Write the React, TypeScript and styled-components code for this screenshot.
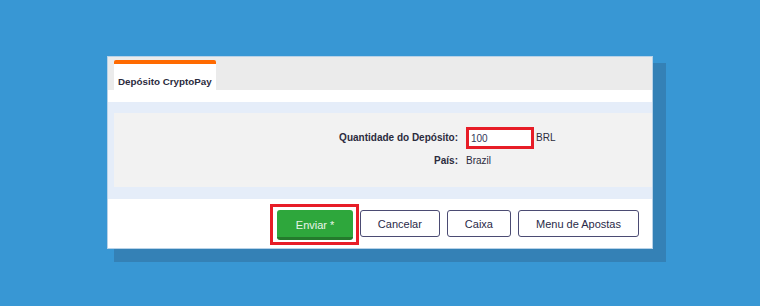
import React from "react";
import styled, { createGlobalStyle } from "styled-components";

const GlobalStyle = createGlobalStyle`
  html, body {
    margin: 0;
    padding: 0;
    background: #3897d4;
  }
  * {
    box-sizing: border-box;
  }
`;

const Page = styled.div`
  width: 760px;
  height: 306px;
  padding: 56px 0 0 107px;
  background: #3897d4;
  font-family: "Liberation Sans", Arial, sans-serif;
  overflow: hidden;
`;

const Panel = styled.div`
  width: 546px;
  height: 193px;
  display: flex;
  flex-direction: column;
  background: #ffffff;
  border: 1px solid #b7d2e8;
  box-shadow: 10px 10px 0 3px #3481b6;
`;

const TabBar = styled.div`
  height: 33px;
  display: flex;
  align-items: flex-end;
  padding-left: 6px;
  background: #ebebeb;
`;

const Tab = styled.div`
  height: 30px;
  padding: 12px 4px 0;
  background: #ffffff;
  border-top: 4px solid #ff6a00;
  border-radius: 2px 2px 0 0;
  font-size: 9.8px;
  font-weight: bold;
  line-height: 12px;
  color: #2b2b3d;
  white-space: nowrap;
`;

const Spacer = styled.div`
  height: 12px;
`;

const Body = styled.div`
  height: 97px;
  padding: 11px 0 12px 6px;
  background: #e5edf9;
`;

const FormBox = styled.div`
  height: 74px;
  display: grid;
  grid-template-columns: 344px auto;
  column-gap: 8px;
  row-gap: 6px;
  align-content: start;
  align-items: center;
  padding-top: 14px;
  background: #f2f2f2;
`;

const Label = styled.div`
  text-align: right;
  font-size: 10px;
  font-weight: bold;
  line-height: 12px;
  color: #2b2b3d;
`;

const Value = styled.div`
  display: flex;
  align-items: center;
  gap: 2px;
  font-size: 10px;
  line-height: 12px;
  color: #2b2b3d;
`;

const AmountInput = styled.input`
  width: 68px;
  height: 22px;
  padding: 0 0 0 2px;
  border: 3px solid #e71d27;
  background: #ffffff;
  font-family: "Liberation Sans", Arial, sans-serif;
  font-size: 10px;
  color: #33385a;
  outline: none;
`;

const Footer = styled.div`
  flex: 1;
  display: flex;
  justify-content: flex-end;
  align-items: flex-start;
  gap: 7px;
  padding: 11px 13px 0 0;
`;

const Highlight = styled.div`
  display: flex;
  flex-shrink: 0;
  padding: 3px 3px 2px 4px;
  margin: -6px -6px -5px -7px;
  border: 3px solid #e71d27;
`;

const Button = styled.button<{ $primary?: boolean }>`
  flex-shrink: 0;
  height: ${(p) => (p.$primary ? "30px" : "27px")};
  padding: 0 ${(p) => (p.$primary ? "18.5px" : "17px")};
  font-family: "Liberation Sans", Arial, sans-serif;
  font-size: 11px;
  border-radius: 3px;
  cursor: pointer;
  white-space: nowrap;
  background: ${(p) => (p.$primary ? "#2ea73c" : "#ffffff")};
  color: ${(p) => (p.$primary ? "#e9f5ea" : "#2a2a48")};
  border: ${(p) => (p.$primary ? "none" : "1px solid #4b4b73")};
  border-bottom: ${(p) => (p.$primary ? "3px solid #247a2c" : "1px solid #4b4b73")};
  padding-top: ${(p) => (p.$primary ? "2px" : "0")};
  outline: none;
`;

export default function App() {
  return (
    <>
      <GlobalStyle />
      <Page>
        <Panel>
          <TabBar>
            <Tab>Depósito CryptoPay</Tab>
          </TabBar>
          <Spacer />
          <Body>
            <FormBox>
              <Label>Quantidade do Depósito:</Label>
              <Value>
                <AmountInput defaultValue="100" />
                <span>BRL</span>
              </Value>
              <Label>País:</Label>
              <Value>Brazil</Value>
            </FormBox>
          </Body>
          <Footer>
            <Highlight>
              <Button $primary>Enviar *</Button>
            </Highlight>
            <Button>Cancelar</Button>
            <Button>Caixa</Button>
            <Button>Menu de Apostas</Button>
          </Footer>
        </Panel>
      </Page>
    </>
  );
}
